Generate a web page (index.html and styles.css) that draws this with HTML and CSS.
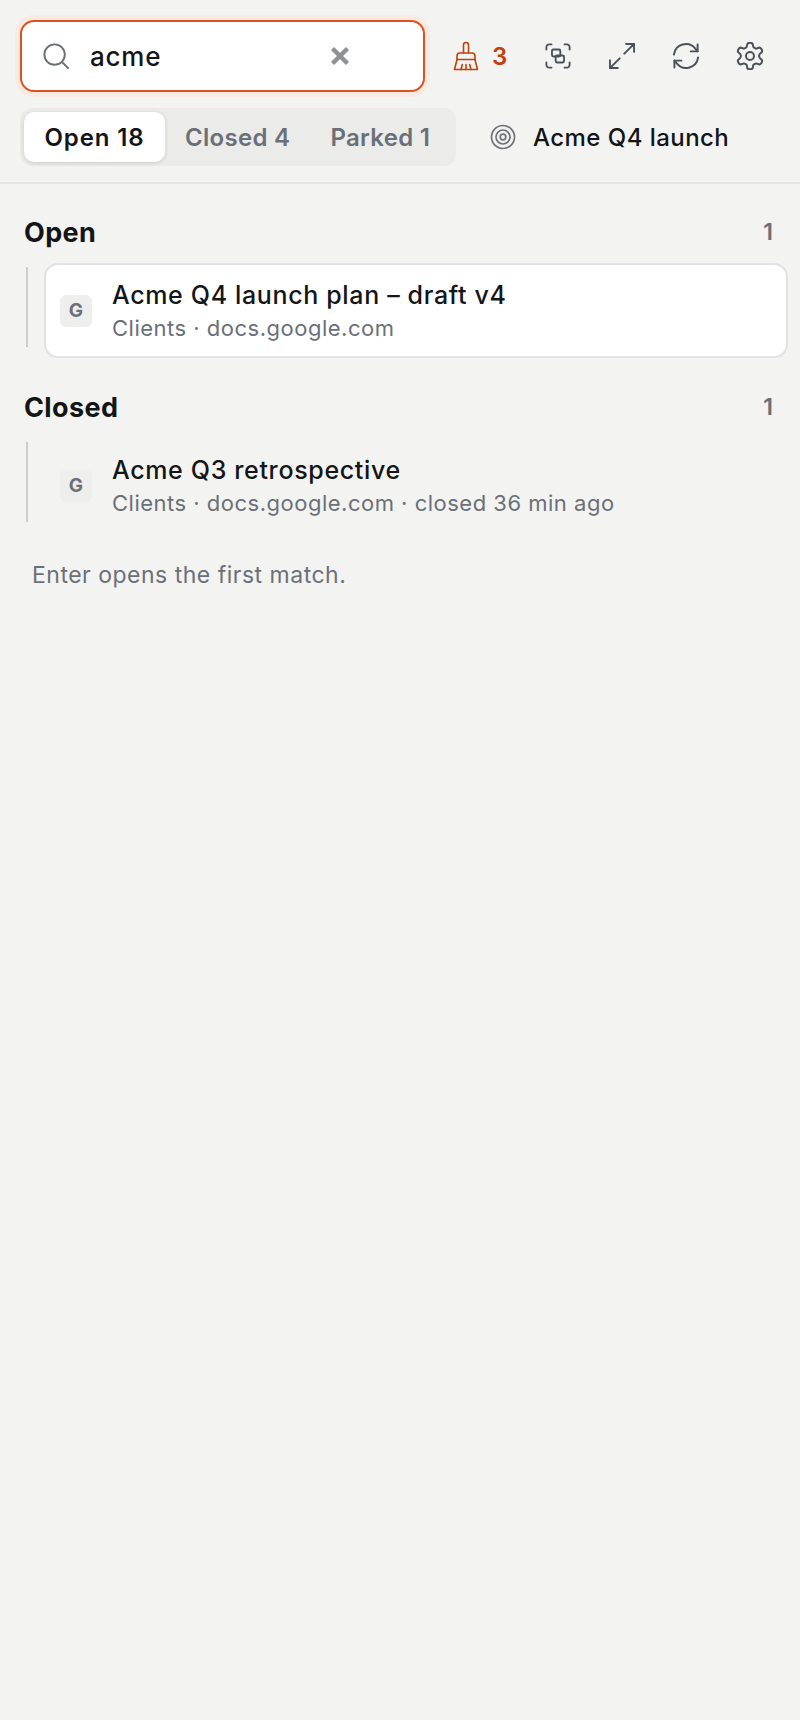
FILE: index.html
```html
<!DOCTYPE html>
<html lang="en">
<head>
<meta charset="utf-8">
<title>Tabs</title>
<link rel="stylesheet" href="styles.css">
</head>
<body>
<header class="top">
  <div class="row-one">
    <div class="search">
      <svg class="search-icon" viewBox="0 0 28 28" fill="none" stroke="#6b7078" stroke-width="2.100" stroke-linecap="round"><circle cx="12.500" cy="12.500" r="11"/><path d="M20.600 20.600l6.400 6.400"/></svg>
      <span class="query">acme</span>
      <svg class="clear" viewBox="0 0 20 20" fill="none" stroke="#8f9194" stroke-width="4.400"><path d="M2.500 2.500l15 15M17.500 2.500l-15 15"/></svg>
    </div>
    <div class="tools">
      <div class="sweep">
        <svg class="broom" viewBox="0 0 28 30" fill="none" stroke="#c2410c" stroke-width="1.600" stroke-linecap="round" stroke-linejoin="round"><path d="M11.500 12V4a2.500 2.500 0 0 1 5 0v8"/><path d="M5 18.500v-3.500a3 3 0 0 1 3-3h12a3 3 0 0 1 3 3v3.500z"/><path d="M5 18.500 2.500 28.500h23L23 18.500"/><path d="M9 28.500l1.300-5M14 28.500v-5M19 28.500l-1.300-5"/></svg>
        <span>3</span>
      </div>
      <svg class="ic" viewBox="0 0 28 28" fill="none" stroke="#4b5159" stroke-width="2" stroke-linecap="round" stroke-linejoin="round"><path d="M1.500 7V4.500a3 3 0 0 1 3-3H7M21 1.500h2.500a3 3 0 0 1 3 3V7M26.500 21v2.500a3 3 0 0 1-3 3H21M7 26.500H4.500a3 3 0 0 1-3-3V21"/><rect x="7.500" y="7" width="9" height="7.500" rx="1.500"/><rect x="11.500" y="13.500" width="9" height="7.500" rx="1.500"/></svg>
      <svg class="ic" viewBox="0 0 28 28" fill="none" stroke="#4b5159" stroke-width="2.100" stroke-linecap="round" stroke-linejoin="round"><path d="M16.500 11.500 27 1M18.500 1H27v8.500M11.500 16.500 1 27M1 18.500V27h8.500"/></svg>
      <svg class="ic" viewBox="0 0 28 28" fill="none" stroke="#4b5159" stroke-width="2.100" stroke-linecap="round" stroke-linejoin="round"><path d="M1 12.500A13 13 0 0 1 24 6l2.500 3"/><path d="M26.500 1.500V9H19"/><path d="M27 15.500A13 13 0 0 1 4 22l-2.500-3"/><path d="M1.500 26.500V19H9"/></svg>
      <svg class="gear" viewBox="1.500 1.500 21 21" fill="none" stroke="#4b5159" stroke-width="1.500" stroke-linecap="round" stroke-linejoin="round"><path d="M12.220 2h-.440a2 2 0 0 0-2 2v.180a2 2 0 0 1-1 1.730l-.430.250a2 2 0 0 1-2 0l-.150-.080a2 2 0 0 0-2.730.730l-.220.380a2 2 0 0 0 .730 2.730l.150.100a2 2 0 0 1 1 1.720v.510a2 2 0 0 1-1 1.740l-.150.090a2 2 0 0 0-.730 2.730l.220.380a2 2 0 0 0 2.730.730l.150-.080a2 2 0 0 1 2 0l.430.250a2 2 0 0 1 1 1.730V20a2 2 0 0 0 2 2h.440a2 2 0 0 0 2-2v-.180a2 2 0 0 1 1-1.730l.430-.250a2 2 0 0 1 2 0l.150.080a2 2 0 0 0 2.730-.730l.220-.390a2 2 0 0 0-.730-2.730l-.150-.080a2 2 0 0 1-1-1.740v-.500a2 2 0 0 1 1-1.740l.150-.090a2 2 0 0 0 .730-2.730l-.220-.380a2 2 0 0 0-2.730-.730l-.150.080a2 2 0 0 1-2 0l-.430-.250a2 2 0 0 1-1-1.730V4a2 2 0 0 0-2-2z"/><circle cx="12" cy="12" r="3"/></svg>
    </div>
  </div>
  <div class="row-two">
    <nav class="tabs">
      <span class="tab active">Open 18</span>
      <span class="tab">Closed 4</span>
      <span class="tab">Parked 1</span>
    </nav>
    <div class="focus">
      <svg class="target" viewBox="0 0 26 26" fill="none" stroke="#6f7378" stroke-width="1.700"><circle cx="13" cy="13" r="11.500"/><circle cx="13" cy="13" r="7"/><circle cx="13" cy="13" r="2.800"/></svg>
      <span>Acme Q4 launch</span>
    </div>
  </div>
</header>
<main class="list">
  <section class="group">
    <div class="group-head"><h2>Open</h2><span class="count">1</span></div>
    <div class="items">
      <article class="item selected">
        <span class="favicon">G</span>
        <div class="text">
          <div class="title">Acme Q4 launch plan – draft v4</div>
          <div class="meta">Clients · docs.google.com</div>
        </div>
      </article>
    </div>
  </section>
  <section class="group">
    <div class="group-head"><h2>Closed</h2><span class="count">1</span></div>
    <div class="items">
      <article class="item">
        <span class="favicon">G</span>
        <div class="text">
          <div class="title">Acme Q3 retrospective</div>
          <div class="meta">Clients · docs.google.com · closed 36 min ago</div>
        </div>
      </article>
    </div>
  </section>
  <p class="hint">Enter opens the first match.</p>
</main>
</body>
</html>
```
FILE: styles.css
```css
* { box-sizing: border-box; }
html, body { margin: 0; height: 100%; }
body {
  background: #f3f3f2;
  font-family: Inter, "Liberation Sans", sans-serif;
  color: #141517;
}
.top {
  height: 184px;
  padding: 20px 0 0 20px;
  border-bottom: 2px solid #e4e5e6;
}
.row-one { display: flex; align-items: center; height: 72px; }
.search {
  width: 405px;
  height: 72px;
  display: flex;
  align-items: center;
  padding-left: 21px;
  background: #fff;
  border: 2px solid #dd5220;
  border-radius: 14px;
  box-shadow: 0 0 0 5px #fbeae3;
}
.search-icon { width: 26px; height: 26px; flex: none; }
.query { font-size: 26px; font-weight: 500; letter-spacing: .8px; margin-left: 21px; width: 240px; }
.clear { width: 20px; height: 20px; flex: none; }
.tools { display: flex; align-items: center; gap: 38px; margin-left: 27px; }
.ic { width: 26px; height: 26px; flex: none; }
.broom { width: 28px; height: 30px; flex: none; }
.gear { width: 28px; height: 28px; flex: none; margin-left: -1px; }
.sweep { display: flex; align-items: center; gap: 12px; color: #c2410c; font-size: 24px; font-weight: 600; }
.row-two { display: flex; align-items: center; margin-top: 16px; }
.tabs {
  display: flex;
  height: 58px;
  width: 436px;
  padding: 4px;
  background: #ebebea;
  border-radius: 12px;
}
.tab {
  display: flex;
  flex: none;
  align-items: center;
  justify-content: center;
  padding: 0 20px;
  font-size: 24px;
  font-weight: 600;
  letter-spacing: .3px;
  white-space: nowrap;
  color: #6b7078;
  border-radius: 10px;
}
.tab.active { width: 141px; padding: 0; letter-spacing: .9px; color: #141517; background: #fff; box-shadow: 0 1px 4px rgba(0,0,0,.14); }
.focus { display: flex; align-items: center; gap: 17px; margin-left: 34px; font-size: 24px; font-weight: 500; letter-spacing: .45px; }
.target { width: 26px; height: 26px; flex: none; }
.list { padding: 0 12px 0 26px; }
.group-head { display: flex; justify-content: space-between; align-items: center; height: 32px; padding-right: 15px; }
.group-head h2 { margin: 0 0 0 -2px; font-size: 27px; font-weight: 700; letter-spacing: .4px; }
.count { font-size: 23px; font-weight: 600; color: #6b7078; }
.group:first-child { padding-top: 32px; }
.group + .group { margin-top: 33px; }
.items { margin-top: 15px; padding-left: 18px; position: relative; }
.items::before { content: ""; position: absolute; left: 0; top: 4px; bottom: 11px; width: 2px; background: #cdcdcc; }
.item { display: flex; align-items: center; height: 95px; padding-left: 14px; border: 2px solid transparent; border-radius: 14px; }
.item.selected { background: #fff; border-color: #e2e2e2; }
.favicon { width: 32px; height: 32px; flex: none; display: flex; align-items: center; justify-content: center; border-radius: 6px; background: #eeeeed; color: #6b7078; font-size: 19px; font-weight: 700; }
.text { margin-left: 20px; padding-top: 3px; }
.title { font-size: 25px; font-weight: 500; letter-spacing: .65px; line-height: 33px; }
.meta { font-size: 22px; color: #6b7078; letter-spacing: .5px; line-height: 33px; }
.hint { margin: 27px 0 0 6px; font-size: 23px; letter-spacing: .5px; line-height: 30px; color: #6b7078; }
```
